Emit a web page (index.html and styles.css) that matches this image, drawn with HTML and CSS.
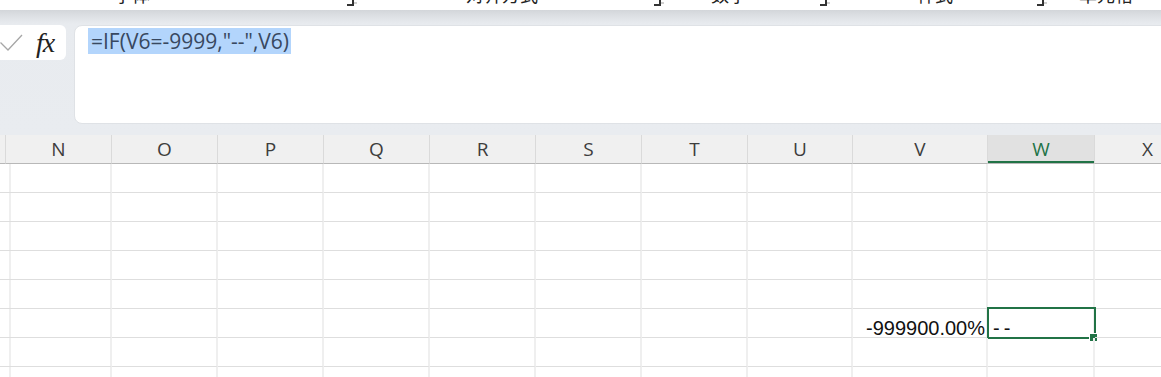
FILE: index.html
```html
<!DOCTYPE html>
<html lang="zh-CN">
<head>
    <meta charset="UTF-8">
    <meta name="viewport" content="width=device-width, initial-scale=1.0">
    <title>工作表</title>
    <link rel="stylesheet" href="styles.css">
</head>
<body>
    <div class="ribbon">
        <span class="group-label g-font">字体</span><span class="launcher l-font"></span>
        <span class="group-label g-align">对齐方式</span><span class="launcher l-align"></span>
        <span class="group-label g-number">数字</span><span class="launcher l-number"></span>
        <span class="group-label g-style">样式</span><span class="launcher l-style"></span>
        <span class="group-label">单元格</span>
    </div>

    <div class="formula-area">
        <div class="fx-box">
            <svg class="check" width="24" height="18" viewBox="0 0 24 18">
                <polyline points="0.5,8.5 8,16 22,1" fill="none" stroke="#a6a6a6" stroke-width="1.3"/>
            </svg>
            <span class="fx">fx</span>
        </div>
        <div class="formula-input">
            <span class="selected-text">=IF(V6=-9999,"--",V6)</span>
        </div>
    </div>

    <div class="sheet" id="sheet">
        <!-- 表头和单元格由脚本生成 -->
    </div>

    <script>
        const columns = ['', 'N', 'O', 'P', 'Q', 'R', 'S', 'T', 'U', 'V', 'W', 'X'];
        const activeCol = 'W';
        const rowCount = 8;

        // 单元格内容: 行号 -> 列 -> 值
        const values = {
            6: { V: '-999900.00%', W: '--' }
        };

        function buildSheet() {
            const sheet = document.getElementById('sheet');
            let html = columns.map(col => `
                <div class="col-head ${col === activeCol ? 'active' : ''}">${col}</div>
            `).join('');

            for (let r = 1; r <= rowCount; r++) {
                html += columns.map(col => {
                    const text = (values[r] && values[r][col]) || '';
                    const classes = ['cell'];
                    if (col === 'V') classes.push('num');
                    if (col === activeCol && r === 6) classes.push('selected');
                    return `<div class="${classes.join(' ')}">${text}</div>`;
                }).join('');
            }
            sheet.innerHTML = html;
        }

        buildSheet();
    </script>
</body>
</html>
```

FILE: styles.css
```css
* {
    box-sizing: border-box;
}

body {
    margin: 0;
    width: 1161px;
    height: 377px;
    overflow: hidden;
    background: #ffffff;
    font-family: "Open Sans", "Noto Sans CJK SC", sans-serif;
}

/* 功能区底部（被截掉的分组标题） */
.ribbon {
    height: 10px;
    display: flex;
    align-items: flex-start;
    padding-left: 114px;
    overflow: hidden;
    background: #ffffff;
}

.group-label {
    font-family: "Noto Sans CJK SC", sans-serif;
    font-size: 18px;
    line-height: 18px;
    color: #222;
    margin-top: -15px;
    white-space: nowrap;
}

.launcher {
    width: 7px;
    height: 6px;
    border-right: 2px solid #333;
    border-bottom: 2px solid #333;
    box-shadow: 5px 0 0 -2px #cfcfcf;
}

.g-font { margin-right: 197px; }
.l-font { margin-right: 112px; }
.g-align { margin-right: 116px; }
.l-align { margin-right: 50px; }
.g-number { margin-right: 73px; }
.l-number { margin-right: 90px; }
.g-style { margin-right: 84px; }
.l-style { margin-right: 35px; }

/* 编辑栏 */
.formula-area {
    height: 125px;
    display: flex;
    align-items: flex-start;
    gap: 8px;
    padding-top: 15px;
    background: linear-gradient(#d3d6da 0, #e3e6ea 10px, #e8ebef 14px, #e9ecf0 100%);
}

.fx-box {
    width: 76px;
    height: 35px;
    margin-left: -10px;
    display: flex;
    align-items: center;
    padding-left: 10px;
    background: #ffffff;
    border-radius: 6px;
}

.fx {
    margin-left: 12px;
    font-family: "Liberation Serif", serif;
    font-style: italic;
    font-size: 28px;
    line-height: 26px;
    letter-spacing: -1px;
    color: #222;
}

.formula-input {
    flex: 1;
    height: 99px;
    margin-right: -20px;
    padding: 2px 0 0 13px;
    background: #ffffff;
    border: 1px solid #dfe2e6;
    border-radius: 8px;
}

.selected-text {
    display: inline-block;
    padding: 0 2px 0 3px;
    background: #b3d5fc;
    color: #384860;
    font-size: 21px;
    line-height: 26px;
}

/* 工作表网格 */
.sheet {
    display: grid;
    grid-template-columns: 6px repeat(7, 106px) 105px 135px 107px 106px;
    grid-auto-rows: 29px;
}

.col-head {
    display: flex;
    align-items: center;
    justify-content: center;
    background: #f0f0f0;
    color: #3d3d3d;
    font-size: 19px;
    border-right: 1px solid #dadada;
    border-bottom: 1px solid #b8b8b8;
}

.col-head.active {
    background: #e1e1e1;
    color: #217346;
    box-shadow: inset 0 -2px 0 #217346;
}

.cell {
    position: relative;
    display: flex;
    align-items: flex-end;
    padding: 0 4px 0 5px;
    border-right: 2px solid #efefef;
    border-bottom: 1px solid #dedede;
    font-family: "Liberation Sans", sans-serif;
    font-size: 20px;
    line-height: 18px;
    color: #111;
    white-space: nowrap;
}

.cell.num {
    justify-content: flex-end;
    padding-right: 1px;
}

.cell.selected {
    letter-spacing: 4px;
}

.cell.selected::before {
    content: "";
    position: absolute;
    top: -2px;
    left: -1px;
    right: -3px;
    bottom: -2px;
    border: 2px solid #217346;
}

.cell.selected::after {
    content: "";
    position: absolute;
    right: -5px;
    bottom: -5px;
    width: 7px;
    height: 7px;
    background: #217346;
    border: 1px solid #ffffff;
}
```
